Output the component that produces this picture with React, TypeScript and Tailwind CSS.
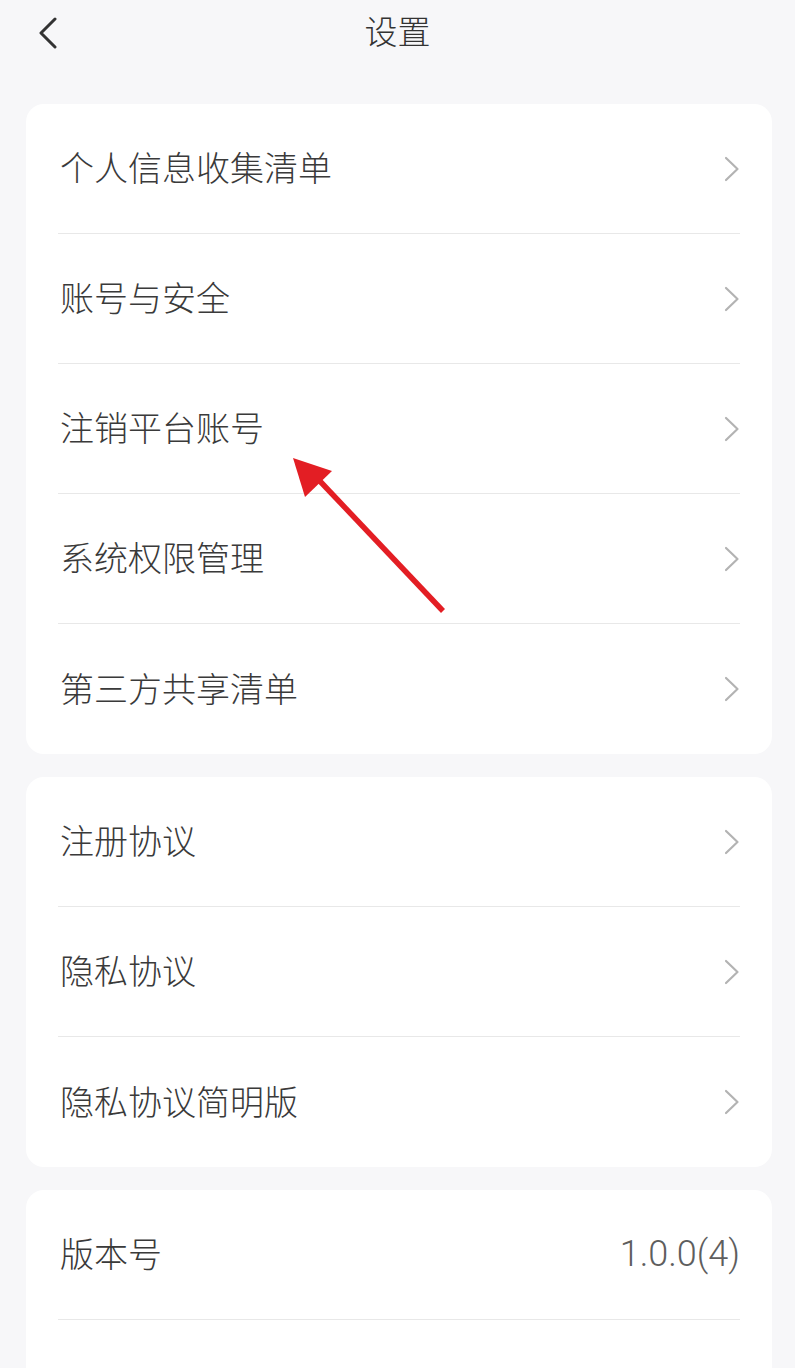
import React from 'react'

const font = { fontFamily: '"Noto Sans CJK SC", "Noto Sans", sans-serif' }

interface Row {
  label: string
  value?: string
}

const groups: Row[][] = [
  [
    { label: '个人信息收集清单' },
    { label: '账号与安全' },
    { label: '注销平台账号' },
    { label: '系统权限管理' },
    { label: '第三方共享清单' },
  ],
  [{ label: '注册协议' }, { label: '隐私协议' }, { label: '隐私协议简明版' }],
  [{ label: '版本号', value: '1.0.0(4)' }, { label: '检查更新' }],
]

const Chevron = () => (
  <svg width="16" height="26" viewBox="0 0 16 26" fill="none" className="shrink-0">
    <path d="M2 2 L13.5 13 L2 24" stroke="#b3b3b3" strokeWidth="2.2" strokeLinecap="round" strokeLinejoin="round" />
  </svg>
)

function SettingsRow({ row, last }: { row: Row; last: boolean }) {
  return (
    <div className="px-[32px]">
      <div
        className={
          'flex h-[130px] items-center justify-between ' +
          (last ? '' : 'border-b border-[#e8e8e8]')
        }
      >
        <span className="pl-[2px] pb-[3px] text-[34px] font-light leading-none text-[#3a3a3a]">{row.label}</span>
        {row.value ? (
          <span className="pb-[2px] text-[36px] font-light leading-none text-[#5e5e5e] font-['Roboto',sans-serif]">{row.value}</span>
        ) : (
          <Chevron />
        )}
      </div>
    </div>
  )
}

export default function App() {
  return (
    <div className="relative h-[1368px] w-[795px] overflow-hidden bg-[#f7f7f9]" style={font}>
      <header className="relative flex h-[64px] items-center justify-center">
        <svg
          width="20"
          height="32"
          viewBox="0 0 20 32"
          fill="none"
          className="absolute left-[38px] top-[17px]"
        >
          <path d="M17 2 L3 16 L17 30" stroke="#333333" strokeWidth="3" strokeLinecap="round" strokeLinejoin="round" />
        </svg>
        <h1 className="pb-[4px] text-[33px] font-light leading-none text-[#333333]">设置</h1>
      </header>

      <main className="flex flex-col gap-[23px] pl-[26px] pr-[23px] pt-[40px]">
        {groups.map((group, gi) => (
          <section key={gi} className="overflow-hidden rounded-[18px] bg-white">
            {group.map((row, ri) => (
              <SettingsRow key={row.label} row={row} last={ri === group.length - 1} />
            ))}
          </section>
        ))}
      </main>

      <svg
        className="pointer-events-none absolute left-0 top-0"
        width="795"
        height="1368"
        viewBox="0 0 795 1368"
        fill="none"
      >
        <line x1="443" y1="611" x2="316" y2="477" stroke="#e31e24" strokeWidth="5.5" strokeLinecap="butt" />
        <polygon points="293,458 332,471 305,497" fill="#e31e24" />
      </svg>
    </div>
  )
}
